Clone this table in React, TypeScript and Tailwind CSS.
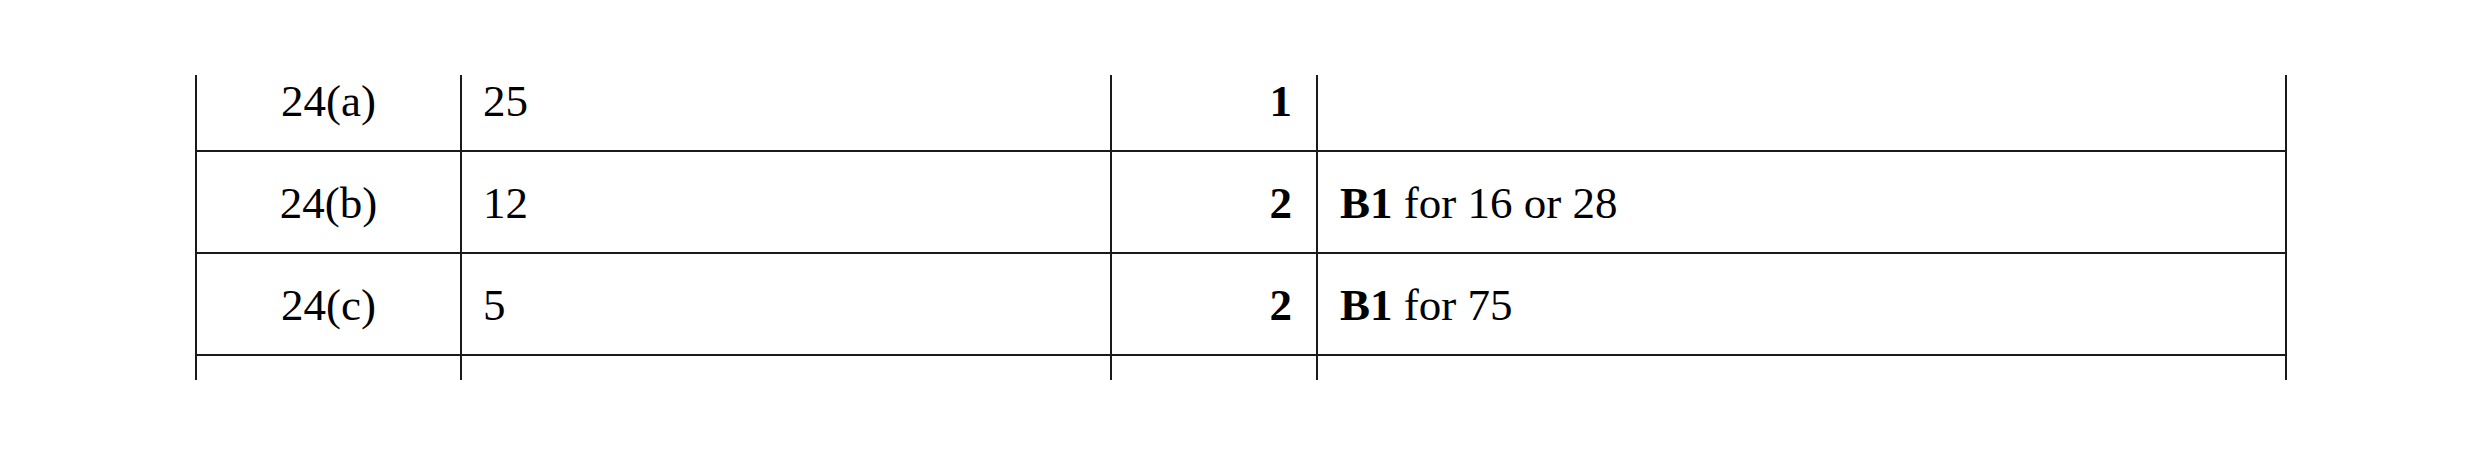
const rows = [
  { part: '24(a)', answer: '25', marks: '1', note: null },
  { part: '24(b)', answer: '12', marks: '2', note: 'for 16 or 28' },
  { part: '24(c)', answer: '5', marks: '2', note: 'for 75' },
  { part: '', answer: '', marks: '', note: null },
]

export default function App() {
  return (
    <div className="h-[456px] w-[2480px] bg-white pt-[75px] font-['Liberation_Serif',serif] text-[45px] leading-[45px] text-black">
      <div className="ml-[195px] h-[305px] w-[2092px] overflow-hidden">
        <div className="-mt-[27px]">
          {rows.map((row, i) => (
            <div key={i} className="flex h-[102px] border-t-2 border-[#1a1a1a]">
              <div className="flex w-[265px] items-center justify-center border-l-2 border-[#1a1a1a] pt-[2px]">
                {row.part}
              </div>
              <div className="flex w-[650px] items-center border-l-2 border-[#1a1a1a] pl-[21px] pt-[2px]">
                {row.answer}
              </div>
              <div className="flex w-[206px] items-center justify-end border-l-2 border-[#1a1a1a] pr-[24px] pt-[2px] font-bold">
                {row.marks}
              </div>
              <div className="flex w-[971px] items-center border-x-2 border-[#1a1a1a] pl-[22px] pt-[2px]">
                {row.note && (
                  <span>
                    <b>B1</b> {row.note}
                  </span>
                )}
              </div>
            </div>
          ))}
        </div>
      </div>
    </div>
  )
}
